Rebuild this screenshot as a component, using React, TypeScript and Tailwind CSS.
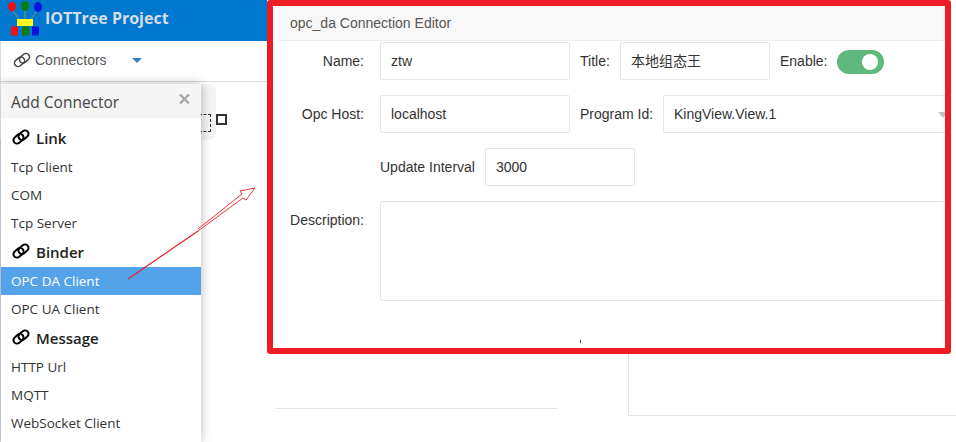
const popupFont = "font-['Open_Sans','Noto_Sans',sans-serif]";

function LinkIcon({ color, weight }: { color: string; weight: number }) {
  return (
    <svg width="18" height="14" viewBox="0 0 18 14" fill="none" stroke={color} strokeWidth={weight} className="mb-[2px] shrink-0 overflow-visible">
      <rect x="1" y="5.300" width="11" height="7" rx="3.500" transform="rotate(-40 6.500 8.800)" />
      <rect x="6" y="1.700" width="11" height="7" rx="3.500" transform="rotate(-40 11.500 5.200)" />
    </svg>
  );
}

function Logo() {
  return (
    <svg width="44" height="38" viewBox="0 0 44 38" className="absolute left-0 top-0">
      <path d="M13 11 L19 19 M25 10 L25 19 M37 11 L31 19" stroke="#7f9a60" strokeWidth="1" fill="none" />
      <ellipse cx="12" cy="6.500" rx="4" ry="4.800" fill="#ee1111" />
      <ellipse cx="25" cy="6" rx="4" ry="5" fill="#0a7d0a" />
      <ellipse cx="38" cy="7" rx="4" ry="5" fill="#1111dd" />
      <rect x="17" y="19" width="16" height="7" fill="#ffff22" />
      <rect x="11" y="26.500" width="7" height="9" fill="#ee1111" />
      <rect x="22" y="26.500" width="7" height="9" fill="#0a7d0a" />
      <rect x="32" y="26.500" width="7" height="9" fill="#1111dd" />
    </svg>
  );
}

function SectionTitle({ label }: { label: string }) {
  return (
    <div className="flex h-[30px] items-center gap-[6px] pl-[11px] text-[15px] font-semibold text-[#222]">
      <LinkIcon color="#000" weight={2} />
      <span>{label}</span>
    </div>
  );
}

function Item({ label, active }: { label: string; active?: boolean }) {
  return (
    <div
      className={
        active
          ? "flex h-[28px] items-center bg-[#54a3ea] pl-[10px] text-[13.500px] text-white"
          : "flex h-[28px] items-center pl-[10px] text-[13.500px] text-[#333]"
      }
    >
      {label}
    </div>
  );
}

function Field({ value, className }: { value: string; className: string }) {
  return (
    <div
      className={`flex h-[38px] items-center rounded-[2px] border border-[#e6e6e6] bg-white pl-[10px] text-[14px] text-[#333] ${className}`}
    >
      {value}
    </div>
  );
}

function Label({ children, className }: { children: string; className: string }) {
  return <div className={`text-[14px] text-[#333] ${className}`}>{children}</div>;
}

function Editor() {
  return (
    <div className="absolute left-[267px] top-0 h-[354px] w-[684px] overflow-hidden rounded-[3px] border-[6px] border-[#ee1c25] bg-white font-['Liberation_Sans','Noto_Sans_CJK_SC',sans-serif]">
      <div className="ml-[5px] flex h-[35px] items-center border-b border-[#eeeeee] bg-[#f8f8f8] pl-[12px] text-[14px] text-[#555]">
        opc_da Connection Editor
      </div>
      <div className="flex w-[760px] flex-col gap-[15px] pt-px">
        <div className="flex items-center">
          <Label className="w-[91px] text-right">Name:</Label>
          <Field value="ztw" className="ml-[16px] w-[190px]" />
          <Label className="ml-[10px] w-[40px]">Title:</Label>
          <Field value="本地组态王" className="w-[150px]" />
          <Label className="ml-[10px] w-[57px]">Enable:</Label>
          <div className="mt-[2px] flex h-[24px] w-[47px] items-center justify-end rounded-full bg-[#5fb97d] pr-[6px]">
            <div className="size-[16px] rounded-full bg-white" />
          </div>
        </div>
        <div className="flex items-center">
          <Label className="w-[91px] text-right">Opc Host:</Label>
          <Field value="localhost" className="ml-[16px] w-[190px]" />
          <Label className="ml-[10px] w-[83px]">Program Id:</Label>
          <Field value="KingView.View.1" className="relative w-[300px]" />
        </div>
        <div className="flex items-center pl-[107px]">
          <Label className="w-[105px]">Update Interval</Label>
          <Field value="3000" className="w-[150px]" />
        </div>
        <div className="flex items-start">
          <Label className="mt-[9px] w-[91px] text-right">Description:</Label>
          <div className="ml-[16px] h-[100px] w-[620px] rounded-[2px] border border-[#e6e6e6] bg-white" />
        </div>
      </div>
      {/* select caret, clipped by the red frame */}
      <div className="absolute right-[-3px] top-[106px] size-0 border-x-[5px] border-t-[6px] border-x-transparent border-t-[#c4c4c4]" />
      <div className="absolute left-[307px] top-[334px] h-[3px] w-px bg-[#444]" />
    </div>
  );
}

export default function App() {
  return (
    <div className="relative h-[442px] w-[956px] overflow-hidden bg-white">
      {/* top bar */}
      <div className="relative h-[41px] w-[267px] bg-[#0078d0]">
        <Logo />
        <div className="pl-[45px] pt-[6px] font-['Open_Sans',sans-serif] text-[16px] font-bold text-[#d8dde8]">
          IOTTree Project
        </div>
      </div>

      {/* connectors bar */}
      <div className="flex h-[41px] w-[267px] items-center border-b border-[#d9d9d9] pb-px pl-[13px] font-['Liberation_Sans',sans-serif] text-[14px] text-[#555]">
        <LinkIcon color="#444" weight={1.500} />
        <span className="ml-[4px]">Connectors</span>
        <div className="ml-[25px] size-0 border-x-[5px] border-t-[5px] border-x-transparent border-t-[#3c7fc0]" />
      </div>

      {/* background bits of the page underneath */}
      <div className="absolute bottom-0 left-0 top-[41px] w-px bg-[#cfdcee]" />
      <div className="absolute left-[276px] top-[408px] h-px w-[281px] bg-[#e4e4e4]" />
      <div className="absolute left-[628px] top-[340px] h-[76px] w-[328px] border-b border-l border-[#e4e4e4]" />

      {/* toolbar behind the popup */}
      <div className="absolute left-0 top-[84px] flex h-[56px] w-[216px] justify-end rounded-r-[8px] bg-[#f3f3f3]">
        <div className="relative left-[6px] top-[30px] h-[18px] w-[12px] border border-dashed border-[#333]" />
        <div className="relative left-[11px] top-[30px] size-[11px] border-2 border-[#333]" />
      </div>

      {/* add connector popup */}
      <div className={`absolute bottom-0 left-px top-[84px] w-[200px] bg-white shadow-[0_0_10px_rgba(0,0,0,0.28)] ${popupFont}`}>
        <div className="flex h-[34px] items-center justify-between bg-[#f5f5f5] pl-[10px] pr-[11px] pt-[3px] text-[15.500px] font-medium text-[#444]">
          <span>Add Connector</span>
          <svg width="11" height="10" viewBox="0 0 11 10" stroke="#aaa" strokeWidth="2.400" className="mb-[8px]">
            <path d="M1 0.500 L10 9.500 M10 0.500 L1 9.500" />
          </svg>
        </div>
        <div className="pt-[5px]">
          <SectionTitle label="Link" />
          <Item label="Tcp Client" />
          <Item label="COM" />
          <Item label="Tcp Server" />
          <SectionTitle label="Binder" />
          <Item label="OPC DA Client" active />
          <Item label="OPC UA Client" />
          <SectionTitle label="Message" />
          <Item label="HTTP Url" />
          <Item label="MQTT" />
          <Item label="WebSocket Client" />
        </div>
      </div>

      <Editor />

      {/* annotation arrow */}
      <svg width="956" height="442" className="pointer-events-none absolute left-0 top-0">
        <path d="M128 279 L198 231" stroke="#ee1c25" strokeWidth="1.200" fill="none" />
        <path
          d="M198 231 L243 198 L246 200 L255 188 L240 191 L242 194 L198 229"
          stroke="#ee1c25"
          strokeWidth="0.900"
          fill="#fff"
        />
      </svg>
    </div>
  );
}
